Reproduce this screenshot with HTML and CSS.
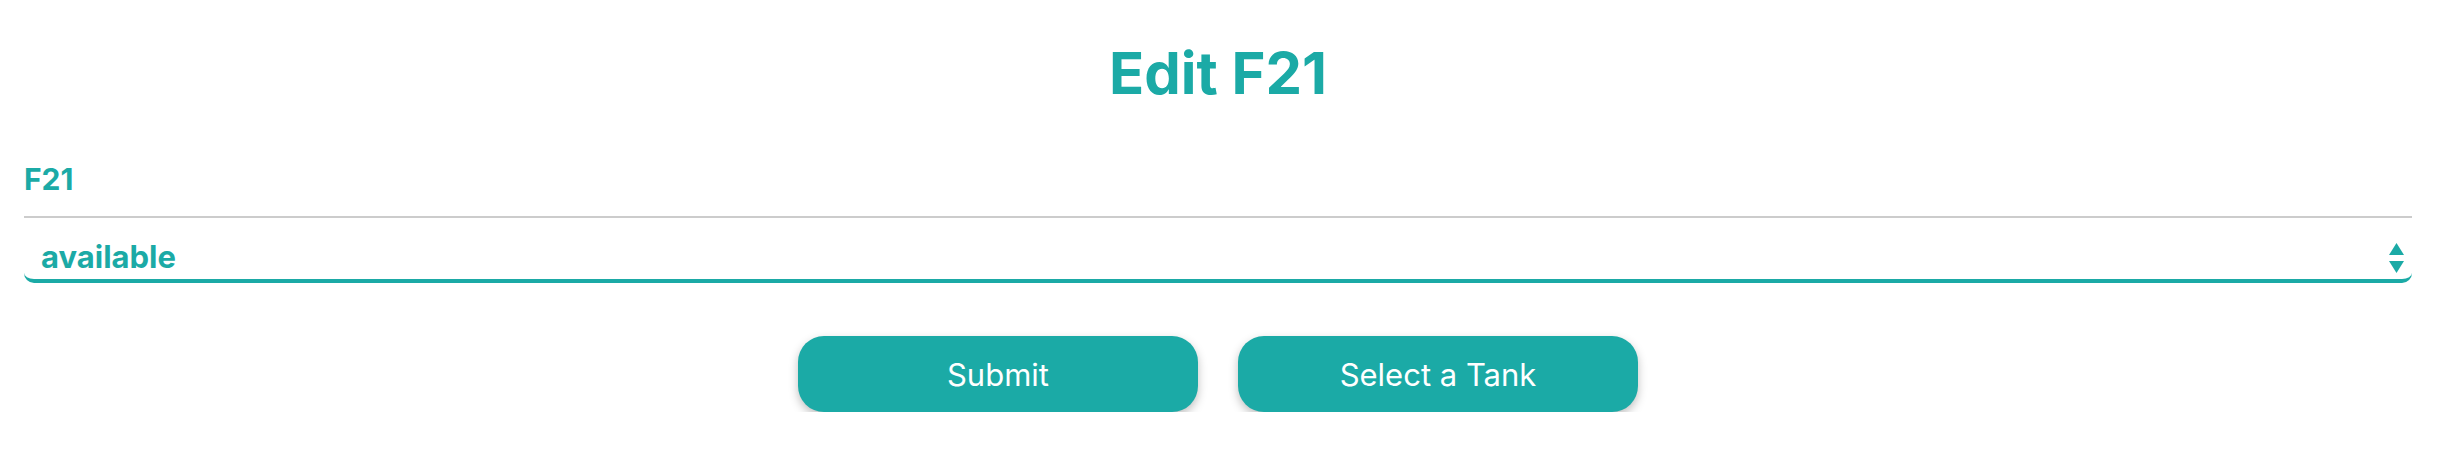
FILE: index.html
```html
<!DOCTYPE html>
<html lang="en">
<head>
<meta charset="utf-8">
<title>Edit F21</title>
<link rel="stylesheet" href="styles.css">
</head>
<body>
<main class="page">
  <h1 class="title">Edit F21</h1>
  <form class="form">
    <div class="field-name">F21</div>
    <div class="select-wrap">
      <select class="status">
        <option>available</option>
        <option>unavailable</option>
      </select>
      <svg class="arrows" width="15" height="30" viewBox="0 0 15 30" aria-hidden="true">
        <path d="M7.5 0 L15 12 L0 12 Z" fill="#1baaa6"/>
        <path d="M0 18 L15 18 L7.5 30 Z" fill="#1baaa6"/>
      </svg>
    </div>
    <div class="actions">
      <button type="submit" class="btn">Submit</button>
      <button type="button" class="btn">Select a Tank</button>
    </div>
  </form>
</main>
</body>
</html>
```
FILE: styles.css
```css
* { box-sizing: border-box; }
html, body { margin: 0; padding: 0; background: #ffffff; }
body { font-family: Inter, "Noto Sans", sans-serif; color: #1baaa6; }
.page { padding: 0 26px 0 24px; }
.title {
  margin: 38px 0 0;
  font-size: 58px;
  line-height: 70px;
  font-weight: 700;
  text-align: center;
  color: #1baaa6;
}
.form { display: flex; flex-direction: column; }
.field-name {
  margin-top: 51px;
  font-size: 30px;
  line-height: 40px;
  font-weight: 700;
  padding-bottom: 17px;
  border-bottom: 2px solid #cccccc;
}
.select-wrap { position: relative; margin-top: 8px; }
.status {
  display: block;
  width: 100%;
  height: 57px;
  -webkit-appearance: none;
  appearance: none;
  background: transparent;
  border: none;
  border-bottom: 4px solid #1baaa6;
  border-radius: 0 0 10px 10px;
  padding: 11px 48px 2px 17px;
  font-family: Inter, "Noto Sans", sans-serif;
  font-size: 31px;
  line-height: 40px;
  font-weight: 700;
  color: #1baaa6;
  outline: none;
}
.arrows { position: absolute; right: 8px; top: 17px; pointer-events: none; }
.actions {
  display: flex;
  justify-content: center;
  gap: 40px;
  margin-top: 53px;
}
.btn {
  width: 400px;
  height: 76px;
  border: none;
  border-radius: 26px;
  background: #1baaa6;
  color: #ffffff;
  font-family: Inter, "Noto Sans", sans-serif;
  font-size: 31px;
  font-weight: 400;
  box-shadow: 0 4px 10px rgba(0, 0, 0, 0.25);
  cursor: pointer;
}
```
